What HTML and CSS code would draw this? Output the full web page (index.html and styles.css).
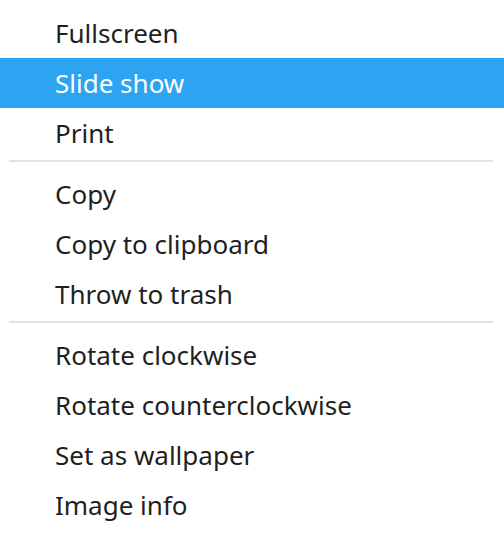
FILE: index.html
```html
<!DOCTYPE html>
<html>
<head>
<meta charset="utf-8">
<link rel="stylesheet" href="styles.css">
</head>
<body>
<div class="menu">
  <div class="item">Fullscreen</div>
  <div class="item active">Slide show</div>
  <div class="item">Print</div>
  <div class="sep"></div>
  <div class="item">Copy</div>
  <div class="item">Copy to clipboard</div>
  <div class="item">Throw to trash</div>
  <div class="sep"></div>
  <div class="item">Rotate clockwise</div>
  <div class="item">Rotate counterclockwise</div>
  <div class="item">Set as wallpaper</div>
  <div class="item">Image info</div>
</div>
</body>
</html>
```
FILE: styles.css
```css
html, body {
  margin: 0;
  padding: 0;
  background: #ffffff;
}
.menu {
  padding-top: 8px;
  font-family: "Noto Sans", "Open Sans", sans-serif;
  font-size: 26px;
  color: #1f1f1f;
}
.item {
  height: 50px;
  line-height: 50px;
  padding-left: 55px;
  white-space: nowrap;
}
.item.active {
  background: #2ca4f1;
  color: #ffffff;
}
.sep {
  height: 2px;
  margin: 2px 11px 7px 9px;
  background: #e2e2e2;
}
```
